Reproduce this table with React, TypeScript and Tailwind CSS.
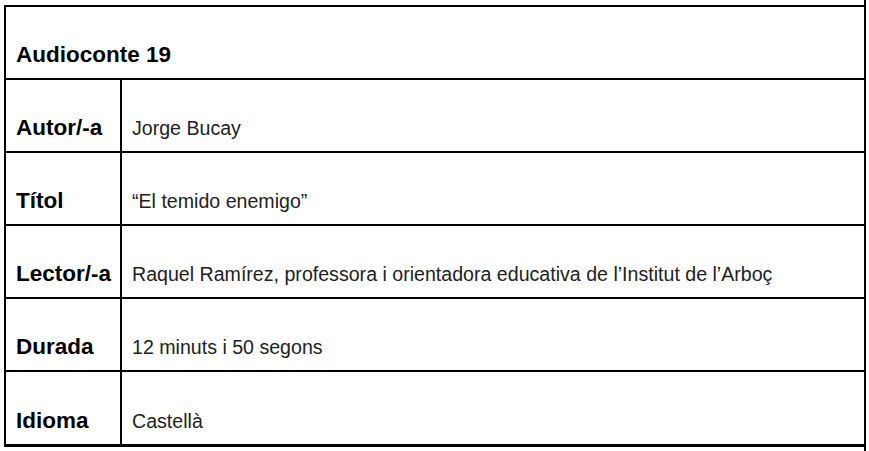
const rows: { label: string; value: string }[] = [
    { label: "Autor/-a", value: "Jorge Bucay" },
    { label: "Títol", value: "“El temido enemigo”" },
    { label: "Lector/-a", value: "Raquel Ramírez, professora i orientadora educativa de l’Institut de l’Arboç" },
    { label: "Durada", value: "12 minuts i 50 segons" },
    { label: "Idioma", value: "Castellà" },
];

const App = () => {
    return (
        <div className="w-[866px] h-[451px] bg-white border-r-2 border-black pt-[5px] pl-[4px] font-['Liberation_Sans',Arial,sans-serif]">
            <div className="flex flex-col border-l-2 border-t-2 border-b-[3px] border-black">
                {/*Header*/}
                <div className="h-[73px] flex items-end pl-[10px] pb-[11px] border-b-2 border-black">
                    <h1 className="text-[22.5px] leading-[25px] font-bold text-black">Audioconte 19</h1>
                </div>

                {rows.map((row, i) => (
                    <div
                        key={row.label}
                        className={`flex flex-row ${i < rows.length - 1 ? "h-[73px] border-b-2 border-black" : "h-[72px]"}`}
                    >
                        <div className="w-[114px] shrink-0 flex items-end pl-[10px] pb-[11px]">
                            <span className="text-[22.5px] leading-[25px] font-bold text-black">{row.label}</span>
                        </div>
                        <div className="flex-1 flex items-end pl-[10px] pb-[12px] border-l-2 border-black">
                            <span className="text-[19.6px] leading-[22px] text-[#222]">{row.value}</span>
                        </div>
                    </div>
                ))}
            </div>
        </div>
    );
};

export default App;
